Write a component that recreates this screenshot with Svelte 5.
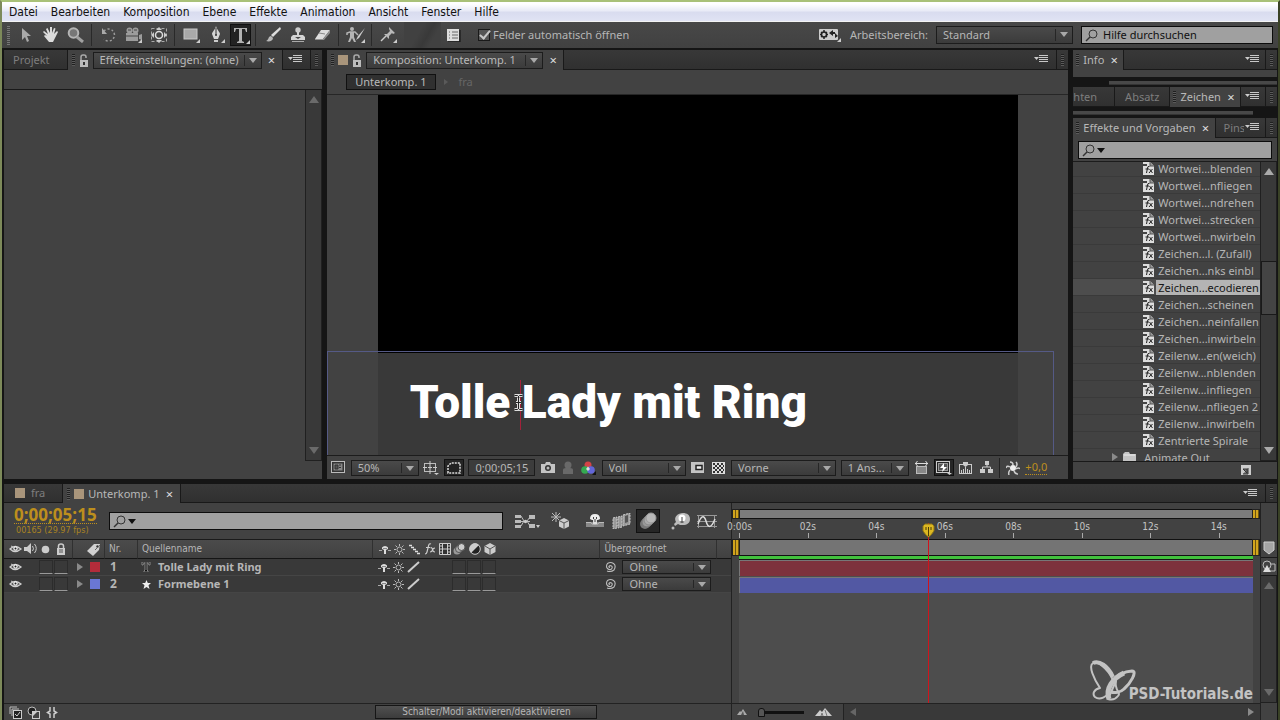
<script>
  const menus = ['Datei', 'Bearbeiten', 'Komposition', 'Ebene', 'Effekte', 'Animation', 'Ansicht', 'Fenster', 'Hilfe'];

  // Each icon: [width, height, svg body]
  const icons = {
    arrow: [14, 16, '<path d="M3 1v12l3-3 2 5 2-1-2-5h4z" fill="#a9a9a9"/>'],
    hand: [18, 16, '<path d="M5 9 1 5l1-1 4 3-2-5 1.500-1L8 6V0h2v6l2-5 1.500.5L12 7l3-3 1 1-3 6-2 4H7L2 9l1-1z" fill="#dcdcdc"/>'],
    zoom: [18, 16, '<circle cx="6.500" cy="6" r="4.800" fill="#777" stroke="#b5b5b5" stroke-width="2"/><path d="m10 10 6 5" stroke="#a0a0a0" stroke-width="3"/>'],
    rotate: [16, 16, '<path d="M3 4a6 6 0 1 1 0 8" fill="none" stroke="#9a9a9a" stroke-width="1.500" stroke-dasharray="2 2"/><path d="M1 1v6h5z" fill="#aaa"/>'],
    camera: [18, 16, '<g fill="#9c9c9c"><circle cx="4.500" cy="3.500" r="3"/><circle cx="10.500" cy="3.500" r="3"/><path d="M1 6h12v8H1zM14 8l3-1v6l-3-1z"/></g><path d="M3 3h3M9 3h3M1 9h12" stroke="#444"/><path d="M17 12v4h-4z" fill="#ccc"/>'],
    panbehind: [18, 18, '<rect x="1.500" y="2.500" width="15" height="13" fill="none" stroke="#aaa" stroke-dasharray="3 2"/><path d="M9 1 6 4h6zM9 17l-3-3h6zM1 9l3-3v6zM17 9l-3-3v6z" fill="#ccc"/><circle cx="9" cy="9" r="3.500" fill="#444" stroke="#ddd" stroke-width="1.500"/>'],
    rect: [18, 16, '<rect x="1" y="2" width="13" height="10" fill="#a9a9a9" stroke="#c8c8c8"/><path d="M17 12v4h-4z" fill="#ccc"/>'],
    pen: [18, 18, '<path d="M8 0c1 4 4 6 4 8l-2 5H6L4 8c0-2 3-4 4-8z" fill="#d5d5d5"/><path d="M8 2v7" stroke="#333"/><circle cx="8" cy="9" r="1" fill="#333"/><path d="M6 14h4v2H6zM17 13v4h-4z" fill="#ccc"/>'],
    type: [18, 18, '<path d="M2 2h13v4h-1l-1-3h-3v12l2 1v1H5v-1l2-1V3H4L3 6H2z" fill="#b2b2b2"/><path d="M18 14v4h-4z" fill="#ccc"/>'],
    brush: [16, 16, '<path d="m15 0-9 8 2 2 8-8z" fill="#ddd"/><path d="M6 9c-3 0-2 4-5 5 3 1 7 0 7-3z" fill="#b8b8b8"/>'],
    stamp: [16, 16, '<circle cx="8" cy="3" r="2.700" fill="#ccc"/><path d="M7 5h2v3h4l2 2v3H1v-3l2-2h4z" fill="#d4d4d4"/><path d="M2 14.500h12" stroke="#aaa"/><path d="M5 10h6l-3 2z" fill="#444"/>'],
    eraser: [18, 14, '<path d="M7 2h9l-7 9H1z" fill="#ddd"/><path d="m9 11 7-9v3l-6 7H1v-1z" fill="#909090"/><path d="m5 5 6 1" stroke="#888"/>'],
    roto: [20, 18, '<circle cx="6" cy="3" r="2" fill="#b5b5b5"/><path d="M1 9V7l3-1h5l3 3" fill="none" stroke="#b5b5b5" stroke-width="1.500"/><path d="M4 6h4v5l2 5H8l-2-4-2 4H2l2-5z" fill="#b5b5b5"/><path d="m19 2-7 8-2 4 3-2z" fill="#ccc"/><path d="M19 13v4h-4z" fill="#ccc"/>'],
    pin: [18, 18, '<path d="m9 1 6 6-2 1-1-1-3 3v3L4 8h3l3-3-1-2z" fill="#b8b8b8"/><path d="m6 10-5 5" stroke="#ccc" stroke-width="1.500"/><path d="M17 13v4h-4z" fill="#ccc"/>'],
    sheet: [14, 14, '<path d="M0 1h12v12H0z" fill="#ddd"/><path d="M2 4h1m2 0h6M2 7h1m2 0h6M2 10h1m2 0h6" stroke="#666"/><path d="M13 2v12H1" fill="none" stroke="#111"/>'],
    gears: [22, 14, '<rect y="1" width="19" height="11" rx="1" fill="#ccc"/><path d="M5 2v9M1 6.500h8M2 4l6 5M8 4 2 9" stroke="#222" stroke-width="1.500"/><circle cx="5" cy="6.500" r="2.500" fill="#ccc" stroke="#222" stroke-width="1.500"/><path d="m14 2-4 3 4 3V6h2v4l3-2-3-3v-1h-2z" fill="#222"/><path d="M22 10v4h-4z" fill="#ccc"/>'],
    lock: [10, 13, '<path d="M2 7V3q0-2 2-2h1q2 0 2 2v1" fill="none" stroke="#aaa" stroke-width="1.500"/><rect x="1" y="6" width="8" height="7" fill="#bcbcbc"/><path d="M5 8v3" stroke="#333" stroke-width="2"/>'],
    closedlock: [10, 12, '<path d="M2.500 6V3q0-2 2.500-2t2.500 2v3" fill="none" stroke="#ccc" stroke-width="1.500"/><rect x="1" y="5" width="8" height="7" fill="#ccc"/><path d="M3 7h4M3 9h4" stroke="#555"/>'],
    menu: [14, 9, '<path d="M0 2h5L2.500 5z" fill="#ccc"/><path d="M5 .5h9m-9 2h9m-9 2h9m-9 2h9" stroke="#c8c8c8"/>'],
    search: [13, 13, '<circle cx="8" cy="5" r="4" fill="none" stroke="#333"/><path d="m5 8-4 4" stroke="#333" stroke-width="1.500"/>'],
    preset: [12, 13, '<path d="M0 0h7l4 4v9H0z" fill="#ddd"/><path d="M7 0v4h4" fill="#999" stroke="#555"/><path d="M6.500 4.500q-2-.5-2 1.500l-1 5M2.500 7H6M6.500 7l3 4M9.500 7l-3.500 4" fill="none" stroke="#222"/><path d="M0 2h4v2H0z" fill="#444"/>'],
    folder: [14, 11, '<path d="M0 2 2 0h4l1 2h6v9H0z" fill="#c4c4c4"/><path d="M1 3h11" stroke="#eee"/>'],
    newitem: [11, 11, '<path d="M0 0h10v10H0z" fill="#ccc"/><path d="M2 4h4v4zM7 3v6H2" fill="#777" stroke="#333"/>'],
    // viewer footer
    monitor: [14, 13, '<rect x=".5" y=".5" width="13" height="11" fill="#333" stroke="#bbb"/><rect x="2.500" y="2.500" width="9" height="7" fill="#888"/><path d="M4 4h3v4H4zM8 4h2M8 6.500h2" fill="#555" stroke="#333"/>'],
    grid: [16, 14, '<rect x="1.500" y="2.500" width="11" height="8" fill="none" stroke="#bbb"/><path d="M7 0v13M0 6.500h4m1 0h4m1 0h4" stroke="#ccc"/><path d="M11 12h5l-2.500 2z" fill="#ccc"/>'],
    mask: [14, 12, '<path d="M1 11V4l3-3h9v10z" fill="#222" stroke="#ddd" stroke-width="1.500" stroke-dasharray="2 1"/>'],
    photo: [14, 12, '<path d="M0 2h4l1-2h4l1 2h4v9H0z" fill="#c4c4c4"/><circle cx="7" cy="6" r="3" fill="#333"/><circle cx="7" cy="6" r="1.500" fill="#bbb"/>'],
    person: [12, 13, '<circle cx="6" cy="4" r="3.500" fill="#696969"/><path d="M1 13V9q0-2 3-2h4q3 0 3 2v4z" fill="#696969"/>'],
    rgb: [16, 14, '<circle cx="7" cy="4" r="3.500" fill="#d34347"/><circle cx="4" cy="9" r="3.800" fill="#35a951"/><circle cx="10" cy="9" r="3.800" fill="#6266d8"/><path d="M7 5.500 9 8l-2 2-2-2z" fill="#ddd"/><path d="M15 10v4h-4z" fill="#111"/>'],
    roi: [14, 11, '<rect width="13" height="11" fill="#c4c4c4"/><rect x="5" y="3.500" width="6" height="4" fill="#eee" stroke="#222" stroke-width="1.500"/>'],
    checker: [13, 12, '<rect width="13" height="12" fill="#ddd"/><path d="M1 2h11M1 6h11M1 10h11" stroke="#333" stroke-width="2" stroke-dasharray="2 2"/><path d="M3 4h9M3 8h9" stroke="#333" stroke-width="2" stroke-dasharray="2 2"/>'],
    aspect: [13, 13, '<rect x="1.500" y="5.500" width="10" height="7" fill="#888" stroke="#bbb"/><path d="M0 2.500h13M2.500 0 .5 2.500l2 2.500M10.500 0l2 2.500-2 2.500" fill="none" stroke="#ddd"/>'],
    fast: [16, 14, '<rect x=".5" y=".5" width="13" height="11" fill="none" stroke="#ccc"/><rect x="2.500" y="2.500" width="9" height="7" fill="#555" stroke="#999"/><path d="M8 2 4 7h3l-1 4 5-5H8z" fill="#fff"/><path d="M11 12h5l-2.500 2z" fill="#ccc"/>'],
    chart: [14, 12, '<rect x=".5" y="2.500" width="12" height="9" fill="none" stroke="#ccc"/><path d="M2.500 11V8m2 3V7m2 4V5m2 6V7m2 4V8" stroke="#ccc"/><path d="M4 0h5v3L6.500 5 4 3z" fill="#ccc"/>'],
    flow: [14, 13, '<path d="M5 0h4v4H5zM0 8h5v4H0zM8 8h5v4H8z" fill="#ccc"/><path d="M7 4v2M2.500 8V6h8v2" fill="none" stroke="#ccc"/>'],
    aperture: [14, 14, '<circle cx="7" cy="7" r="3" fill="#eee"/><path d="M7 4Q7 1 4 1M10 6q2-3 0-5M10 8q3-2 4 0M8 10q1 3 4 3M4 9q-2 2-1 5M4 6Q1 4 0 7" fill="none" stroke="#ccc" stroke-width="1.500"/>'],
    // timeline header
    miniflow: [26, 14, '<path d="M1 1h6v3H1zM1 6h6v3H1zM1 11h6v3H1zM15 1h6v4h-6zM15 10h6v4h-6z" fill="#bbb"/><path d="M7 2l3 5-3 5M4 7.500h12M16 3l-3 4 3 5" fill="none" stroke="#bbb"/><circle cx="11.500" cy="7.500" r="1.700" fill="#ccc"/><path d="M22 11h4l-2 3z" fill="#ccc"/>'],
    draft: [20, 18, '<path d="M5 0v10M0 5h10M1 1l8 8M9 1 1 9" stroke="#bbb"/><path d="m13 6 5 2.500v6L13 17l-5-2.500v-6z" fill="#ccc"/><path d="m8 8.500 5 2.500 5-2.500M13 11v6" fill="none" stroke="#555"/>'],
    shyguy: [18, 14, '<path d="M0 8h18v5H0z" fill="#888"/><path d="M0 8.500h5q0 2 4 2t4-2h5" fill="none" stroke="#bbb"/><path d="M4 5q0-5 5-5t5 5l-2 1H6z" fill="#eee"/><path d="M7 5h4v5H7z" fill="#ddd"/><path d="M7.500 3v2m3-2v2M9 5v3" stroke="#444"/>'],
    blend: [19, 16, '<path d="m1 5 4-1v11l-4 1zM6 4l4-1v11l-4 1zM11 2l7-2v11l-7 2z" fill="#999" stroke="#ccc" stroke-dasharray="2 1"/><path d="m13 3 3-1v7l-3 1z" fill="#555"/>'],
    blur: [18, 18, '<circle cx="6" cy="12" r="5" fill="#777"/><circle cx="8" cy="10" r="5" fill="#999" stroke="#777"/><circle cx="10" cy="8" r="5" fill="#aaa" stroke="#888"/><circle cx="12" cy="6" r="5" fill="#b9b9b9" stroke="#999"/>'],
    idea: [20, 18, '<path d="M12 1c4 0 7 2 7 6s-3 6-7 6c-2 0-4 0-5-1l-3 2-1-2 2-2c-3-5 2-9 7-9z" fill="#bbb"/><circle cx="11" cy="6" r="3.500" fill="#fff"/><path d="M9.500 9h3v2h-3z" fill="#666"/><path d="M11 5v4" stroke="#444"/><circle cx="2" cy="16" r="1.500" fill="#bbb"/>'],
    graph: [20, 15, '<path d="M1.500 1v13m16-13v13M0 1.500h20M0 12.500h20M0 7.500h20" stroke="#999"/><path d="M1 10c3-8 6-10 8-3s5 8 9-2" fill="none" stroke="#ddd" stroke-width="1.500"/>'],
    eye: [13, 10, '<path d="M1 5q5-5 11 0-6 5-11 0z" fill="#555" stroke="#d0d0d0" stroke-width="1.300"/><circle cx="6.500" cy="4.500" r="2.200" fill="#eee"/><circle cx="6.500" cy="4.500" r="1" fill="#222"/><path d="m2 2 2 1" stroke="#ccc"/>'],
    speaker: [14, 12, '<path d="M0 4h3l4-4v11L3 8H0z" fill="#ccc"/><path d="M8.500 3q2 3 0 5M10.500 1q3.500 4.500 0 9" fill="none" stroke="#ccc"/>'],
    dot: [9, 9, '<circle cx="4.500" cy="4.500" r="3.800" fill="#ccc"/>'],
    tag: [15, 13, '<path d="M1 8 8 1l6 0-1 6-6 6z" fill="#d0d0d0"/><circle cx="11.500" cy="3.500" r="1.200" fill="#333"/><path d="m9 7 5-5" stroke="#666"/>'],
    shy: [12, 9, '<path d="M0 5.500h3m6 0h3" stroke="#aaa"/><path d="M3 4V2.500Q4 1 6 1t3 1.500V4L7 5v4H5V5z" fill="#ddd"/><path d="M5 3v1m2-1v1" stroke="#333"/>'],
    sun: [11, 11, '<circle cx="5.500" cy="5.500" r="2.500" fill="none" stroke="#bbb"/><path d="M5.500 0v2m0 7v2M0 5.500h2m7 0h2M1.500 1.500 3 3m5 5 1.500 1.500m0-8L8 3M3 8 1.500 9.500" stroke="#bbb"/>'],
    stair: [11, 11, '<path d="M0 1.500h3m-1 2h3m-1 2h3m-1 2h3m-1 2h3" stroke="#ddd" stroke-width="1.500"/>'],
    slash: [13, 12, '<path d="m1 11 11-10" stroke="#ccc" stroke-width="2"/>'],
    fx: [12, 12, '<path d="M7 1Q5 0 4.500 3L3 9q-.5 2-2 2M2 4.500h4M6.500 5Q8 4 8.500 6.500T11 9M11 5Q9 5 8.500 7T6 9" fill="none" stroke="#ccc" stroke-width="1.200"/>'],
    film: [12, 12, '<path d="M.5.5h11v11H.5z" fill="#333" stroke="#ccc"/><path d="M3.500 0v12m5-12v12M4 6h4M0 3h3m6 0h3M0 6h3m6 0h3M0 9h3m6 0h3" stroke="#ccc"/>'],
    balls: [13, 12, '<circle cx="4" cy="8" r="3.500" fill="#999"/><circle cx="6" cy="6" r="3.500" fill="#aaa" stroke="#555"/><circle cx="8.500" cy="4" r="3.500" fill="#ccc" stroke="#555"/>'],
    half: [12, 12, '<circle cx="6" cy="6" r="5.300" fill="#222" stroke="#ccc"/><path d="M2 10 10 2A5.500 5.500 0 0 0 2 10z" fill="#ccc"/>'],
    cube: [12, 13, '<path d="m6 0 5.500 3v6L6 12 .5 9V3z" fill="#ccc"/><path d="m1 3 5 3 5-3M6 6v6" fill="none" stroke="#555"/>'],
    spiral: [12, 12, '<path d="M6 6.500q-1.500 0-1-1.200Q6 4 7.500 5t0 3q-2 1.500-4-.5t0-5q3-2 6 0t.5 6.500Q7 11.500 3 10" fill="none" stroke="#bbb" stroke-width="1.100"/>'],
    text: [10, 10, '<path d="M1 0h8v3H8L7 1H6v7l1 1v1H3V9l1-1V1H3L2 3H1z" fill="#111" stroke="#888"/>'],
    star: [11, 11, '<path d="m5.500 1 1.300 3H10L7.500 6.200 8.500 10l-3-2-3 2 1-3.800L1 4h3.200z" fill="#eee"/>'],
    marker: [12, 14, '<path d="M1 1h10v8l-5 4-5-4z" fill="#a5a5a5" stroke="#d0d0d0"/>'],
    shapes: [14, 13, '<circle cx="5" cy="5" r="4" fill="none" stroke="#bbb"/><path d="M8 4h5v7H8" fill="none" stroke="#bbb"/><path d="m5 5 4 7H1z" fill="#ddd"/>'],
    sheets: [13, 13, '<path d="M1 8V1h7M3 10V3h7" fill="none" stroke="#bbb"/><rect x="4.500" y="4.500" width="8" height="8" fill="#222" stroke="#ccc"/><path d="m6 8 2 2 3-4" fill="none" stroke="#ccc"/>'],
    modes: [14, 13, '<circle cx="5" cy="5" r="4" fill="#222" stroke="#bbb"/><rect x="5.500" y="5.500" width="7" height="7" fill="#444" stroke="#ccc"/><path d="M6 6h4L6 10z" fill="#ccc"/>'],
    braces: [12, 13, '<path d="M4 1v4L1.500 6.500 4 8v4M8 1v4l2.500 1.500L8 8v4" fill="none" stroke="#ccc" stroke-width="1.500"/>'],
    hillsmall: [10, 6, '<path d="m0 6 3-4 1 1 2-3 4 6z" fill="#aaa"/><path d="m4 6 2-4 1 4" fill="#555"/>'],
    hillbig: [17, 9, '<path d="m0 8 5-6 2 2 3-4 7 8z" fill="#ccc"/><path d="m6 8 1-3 1 3m2-6 2 6" stroke="#777" fill="none"/>'],
    playhead: [13, 15, '<path d="M3 1h7l2 2v5l-3 4-2.500 2L4 12 1 8V3z" fill="#dcb722" stroke="#8d7516"/><path d="M4 4v3m2.500-3v9M9 4v3" stroke="#4b3d05"/>'],
    ibeam: [11, 17, '<path d="M1.500 1.500h3l1 1 1-1h3M5.500 2v13M1.500 15.500h3l1-1 1 1h3M3 8.500h5" fill="none" stroke="#ddd" stroke-width="3"/><path d="M1.500 1.500h3l1 1 1-1h3M5.500 2v13M1.500 15.500h3l1-1 1 1h3M3 8.500h5" fill="none" stroke="#222"/>'],
    butterfly: [50, 44, '<g fill="none" stroke="#c3c3c3" stroke-linejoin="round"><path d="M24 20C18 7 8 1 4 3c-5 3 1 16 7 25-6 1-8 6-5 9 5 4 12-1 14-4" stroke-width="2"/><path d="M4 3c6-3 15 3 20 14" stroke-width="4"/><path d="M20 39c-5-11 7-27 23-28 6 0-2 13-8 18-4 4-10 4-13 3" stroke-width="3"/><path d="M20 39c-4-10 4-21 15-26" stroke-width="5"/><path d="m19 39 8-18c-2 10 6 12 2 15q-4 5-10 3z" stroke-width="2"/></g>'],
  };

  const tools = [['arrow', 'hand', 'zoom'], ['rotate', 'camera', 'panbehind'], ['rect', 'pen', 'type'], ['brush', 'stamp', 'eraser'], ['roto'], ['pin']];

  const presets = [
    'Wortwei...blenden', 'Wortwei...nfliegen', 'Wortwei...ndrehen', 'Wortwei...strecken', 'Wortwei...nwirbeln',
    'Zeichen...l. (Zufall)', 'Zeichen...nks einbl', 'Zeichen...ecodieren', 'Zeichen...scheinen', 'Zeichen...neinfallen',
    'Zeichen...inwirbeln', 'Zeilenw...en(weich)', 'Zeilenw...nblenden', 'Zeilenw...infliegen', 'Zeilenw...nfliegen 2',
    'Zeilenw...inwirbeln', 'Zentrierte Spirale',
  ];
  let selected = $state('Zeichen...ecodieren');

  const layers = [
    { nr: 1, name: 'Tolle Lady mit Ring', icon: 'text', color: '#b32c3a', bar: '#7d323c' },
    { nr: 2, name: 'Formebene 1', icon: 'star', color: '#6a77d4', bar: '#5258a3' },
  ];
  const switchHeads = ['shy', 'sun', 'stair', 'fx', 'film', 'balls', 'half', 'cube'];
  const timelineTools = ['miniflow', 'draft', 'shyguy', 'blend', 'blur', 'idea', 'graph'];

  const duration = 15;
  const playhead = 5.5;
  const ticks = [0, 2, 4, 6, 8, 10, 12, 14];
  const pct = (t) => (t / duration) * 100;
  const label = (t) => (t === 0 ? '0:00s' : String(t).padStart(2, '0') + 's');
</script>

{#snippet icon(name)}
  <svg class="icon" width={icons[name][0]} height={icons[name][1]} viewBox="0 0 {icons[name][0]} {icons[name][1]}" aria-hidden="true">{@html icons[name][2]}</svg>
{/snippet}

{#snippet dropdown(name, value, kind)}
  <span class="dropdown {kind}">
    <select aria-label={name}><option>{value}</option></select>
  </span>
{/snippet}

{#snippet corner()}
  <button class="panel-menu" aria-label="Bedienfeldmenü">{@render icon('menu')}</button>
  <span class="corner"><i class="grip"></i></span>
{/snippet}

<div class="app">
  <nav class="menubar">
    {#each menus as m}<button>{m}</button>{/each}
  </nav>

  <header class="toolbar">
    <i class="grip light"></i>
    <div class="tools">
      {#each tools as group}
        <div class="group">
          {#each group as t}<button class="tool" class:active={t === 'type'} aria-label={t}>{@render icon(t)}</button>{/each}
        </div>
      {/each}
    </div>
    <div class="shade"></div>
    <button class="tool" aria-label="Bedienfelder">{@render icon('sheet')}</button>
    <label class="check"><input type="checkbox" checked />Felder automatisch öffnen</label>
    <button class="tool gears" aria-label="Synchronisieren">{@render icon('gears')}</button>
    <span class="ws-label">Arbeitsbereich:</span>
    {@render dropdown('Arbeitsbereich', 'Standard', 'workspace')}
    <label class="search help">{@render icon('search')}<input type="text" value="Hilfe durchsuchen" aria-label="Hilfe durchsuchen" /></label>
  </header>

  <main class="work">
    <section class="panel effects-settings">
      <div class="tabs">
        <button class="tab wide-pad">Projekt</button>
        <div class="tab on">
          <i class="grip"></i>{@render icon('lock')}
          {@render dropdown('Effekteinstellungen', 'Effekteinstellungen: (ohne)', 'title')}
          <button class="close" aria-label="Schließen">×</button>
        </div>
        <span class="fill"></span>
        {@render corner()}
      </div>
      <div class="strip"></div>
      <div class="scroll-body">
        <div class="fill"></div>
        <div class="scrollbar dim"><i class="up"></i><i class="down"></i></div>
      </div>
      <div class="panel-foot"></div>
    </section>

    <section class="panel viewer">
      <div class="tabs">
        <div class="tab on">
          <i class="grip"></i><i class="swatch tan"></i>{@render icon('lock')}
          {@render dropdown('Komposition', 'Komposition: Unterkomp. 1', 'title')}
          <button class="close" aria-label="Schließen">×</button>
        </div>
        <span class="fill"></span>
        {@render corner()}
      </div>
      <div class="crumbs">
        <button class="crumb">Unterkomp. 1</button><i class="right"></i><span>fra</span>
      </div>
      <div class="stage">
        <div class="canvas">
          <div class="black"></div>
          <div class="lower"><p>Tolle Lady mit Ring</p></div>
        </div>
        <div class="bounds"></div>
        <i class="caret"></i>
        <span class="cursor">{@render icon('ibeam')}</span>
      </div>
      <div class="viewer-foot">
        <button aria-label="Vorschau">{@render icon('monitor')}</button>
        {@render dropdown('Zoom', '50%', 'zoomsel')}
        <button aria-label="Raster">{@render icon('grid')}</button>
        <button class="active" aria-label="Maske">{@render icon('mask')}</button>
        <button class="timebox">0;00;05;15</button>
        <button aria-label="Schnappschuss">{@render icon('photo')}</button>
        <button aria-label="Schnappschuss zeigen">{@render icon('person')}</button>
        <button aria-label="Kanäle">{@render icon('rgb')}</button>
        {@render dropdown('Auflösung', 'Voll', 'res')}
        <button aria-label="Bereich">{@render icon('roi')}</button>
        <button aria-label="Transparenz">{@render icon('checker')}</button>
        {@render dropdown('Ansicht', 'Vorne', 'view')}
        {@render dropdown('Ansichten', '1 Ans...', 'count')}
        <button aria-label="Seitenverhältnis">{@render icon('aspect')}</button>
        <button class="active" aria-label="Schnelle Vorschau">{@render icon('fast')}</button>
        <button aria-label="Zeitleiste">{@render icon('chart')}</button>
        <button aria-label="Flussdiagramm">{@render icon('flow')}</button>
        <i class="rule"></i>
        <button aria-label="Belichtung">{@render icon('aperture')}</button>
        <button class="gold">+0,0</button>
      </div>
    </section>

    <aside class="side">
      <section class="panel">
        <div class="tabs">
          <div class="tab on"><i class="grip"></i>Info<button class="close" aria-label="Schließen">×</button></div>
          <span class="fill"></span>
          {@render corner()}
        </div>
        <div class="sliver"></div>
      </section>
      <div class="track end"></div>
      <section class="panel">
        <div class="tabs">
          <button class="tab cut">hten</button>
          <button class="tab">Absatz</button>
          <div class="tab on"><i class="grip"></i>Zeichen<button class="close" aria-label="Schließen">×</button></div>
          <span class="fill"></span>
          {@render corner()}
        </div>
      </section>
      <div class="track start"></div>
      <section class="panel presets">
        <div class="tabs">
          <div class="tab on"><i class="grip"></i>Effekte und Vorgaben<button class="close" aria-label="Schließen">×</button></div>
          <button class="tab clip">Pins</button>
          {@render corner()}
        </div>
        <div class="search-row">
          <label class="search">{@render icon('search')}<i class="tri"></i><input type="text" aria-label="Effekte suchen" /></label>
        </div>
        <div class="scroll-body">
          <ul class="list">
            {#each presets as p}
              <li class:selected={p === selected}>
                <button onclick={() => (selected = p)}>{@render icon('preset')}<span>{p}</span></button>
              </li>
            {/each}
            <li class="folder"><button><i class="right"></i>{@render icon('folder')}<span>Animate Out</span></button></li>
          </ul>
          <div class="scrollbar"><i class="up"></i><b class="thumb"></b><i class="down"></i></div>
        </div>
        <div class="panel-foot"><button aria-label="Neu">{@render icon('newitem')}</button></div>
      </section>
    </aside>
  </main>

  <section class="panel timeline">
    <div class="tabs">
      <button class="tab"><i class="swatch tan"></i>fra</button>
      <div class="tab on"><i class="grip"></i><i class="swatch tan"></i>Unterkomp. 1<button class="close" aria-label="Schließen">×</button></div>
      <span class="fill"></span>
      {@render corner()}
    </div>
    <div class="tl-grid">
      <div class="layers">
        <div class="tl-head">
          <div class="clock">
            <button class="gold big">0;00;05;15</button>
            <small>00165 (29.97 fps)</small>
          </div>
          <label class="search">{@render icon('search')}<i class="tri"></i><input type="text" aria-label="Ebenen suchen" /></label>
          <div class="tl-tools">
            {#each timelineTools as t}<button class={t} class:active={t === 'blur'} aria-label={t}>{@render icon(t)}</button>{/each}
          </div>
        </div>
        <table>
          <colgroup><col class="c-av" /><col class="c-label" /><col class="c-nr" /><col /><col class="c-switch" /><col class="c-parent" /><col class="c-rest" /></colgroup>
          <thead>
            <tr>
              <th><div class="slots">{@render icon('eye')}{@render icon('speaker')}{@render icon('dot')}{@render icon('closedlock')}</div></th>
              <th><div class="labelcell head">{@render icon('tag')}</div></th>
              <th>Nr.</th>
              <th>Quellenname</th>
              <th><div class="slots">{#each switchHeads as s}{@render icon(s)}{/each}</div></th>
              <th>Übergeordnet</th>
              <th></th>
            </tr>
          </thead>
          <tbody>
            {#each layers as l}
              <tr>
                <td><div class="slots">{@render icon('eye')}<span></span><i class="box"></i><i class="box"></i></div></td>
                <td><div class="labelcell"><i class="right"></i><i class="swatch" style="background:{l.color}"></i></div></td>
                <td>{l.nr}</td>
                <td><div class="namecell"><b>{@render icon(l.icon)}</b><span>{l.name}</span></div></td>
                <td><div class="slots">{@render icon('shy')}{@render icon('sun')}{@render icon('slash')}<span></span><span></span><i class="box"></i><i class="box"></i><i class="box"></i></div></td>
                <td><div class="parentcell">{@render icon('spiral')}{@render dropdown('Übergeordnet ' + l.name, 'Ohne', 'parent')}</div></td>
                <td></td>
              </tr>
            {/each}
          </tbody>
        </table>
        <div class="fill"></div>
        <footer class="tl-foot">
          <button aria-label="Schalter">{@render icon('sheets')}</button>
          <button aria-label="Modi">{@render icon('modes')}</button>
          <button aria-label="In/Out">{@render icon('braces')}</button>
          <button class="toggle">Schalter/Modi aktivieren/deaktivieren</button>
        </footer>
      </div>

      <div class="time">
        <div class="nav"><i class="handle"></i><i class="handle"></i></div>
        <div class="ruler">
          {#each ticks as t}<span style="left:{pct(t)}%">{label(t)}</span>{/each}
        </div>
        <div class="workbar"><i class="handle"></i><i class="handle"></i></div>
        <div class="cache"></div>
        <div class="bars">
          {#each layers as l}<div class="bar" style="background:{l.bar}"></div>{/each}
        </div>
        <footer class="time-foot">
          {@render icon('hillsmall')}
          <input type="range" min="0" max="100" value="0" aria-label="Zeitzoom" />
          {@render icon('hillbig')}
          <div class="hscroll"><i class="left"></i><i class="right"></i></div>
        </footer>
        <div class="playline"><div style="left:{pct(playhead)}%">{@render icon('playhead')}</div></div>
        <div class="brand">{@render icon('butterfly')}<span>PSD-Tutorials.de</span></div>
      </div>

      <div class="gutter">
        <button class="mark" aria-label="Marke">{@render icon('marker')}</button>
        <button class="mark low" aria-label="Formen">{@render icon('shapes')}</button>
        <div class="scrollbar dim"><i class="up"></i><i class="down"></i></div>
      </div>
    </div>
  </section>
</div>

<style>
  :global(body) { margin: 0; background: #151515; }
  * { box-sizing: border-box; }
  .app {
    height: 100vh; min-height: 560px; display: flex; flex-direction: column; overflow: hidden;
    border: solid #7d8a5a; border-width: 2px 2px 0; border-top-color: #a9c178; border-right-color: #3a4226;
    background: #151515; color: #b6b6b6; font: 11px/16px "Noto Sans", "Open Sans", sans-serif;
  }
  button, input, select { font: inherit; color: inherit; margin: 0; padding: 0; border: 0; background: none; border-radius: 0; outline: none; }
  button { display: flex; align-items: center; justify-content: center; white-space: nowrap; }
  .icon { flex: none; display: block; }
  i { flex: none; display: block; }
  .fill { flex: 1; min-width: 0; }

  .menubar { display: flex; flex: none; gap: 1px; height: 20px; padding-left: 1px; background: linear-gradient(#fff 10%, #e9ebf7 45%, #d9dcef 55%, #e0e3f4); border-bottom: 1px solid #f4f4f4; color: #111; font: 12px/18px "DejaVu Sans Condensed", "DejaVu Sans", sans-serif; }
  .menubar button { padding: 0 6px; }

  .toolbar { display: flex; flex: none; align-items: center; height: 26px; background: linear-gradient(#484848, #414141); padding-left: 5px; padding-right: 5px; }
  .grip { width: 3px; height: 12px; background: repeating-linear-gradient(#202020 0 1px, #5a5a5a 1px 2px); }
  .grip.light { height: 19px; background: repeating-linear-gradient(#777 0 1px, #444 1px 2px); margin-right: 3px; }
  .tools, .group { display: flex; align-items: center; }
  .group { padding-right: 3px; margin-right: 4px; border-right: 1px solid #292929; }
  .group:last-child { border: 0; margin: 0; }
  .tool { width: 25px; height: 22px; }
  .tool.active { width: 21px; margin: 0 1px; background: #222; border: 1px solid #111; }
  .shade { width: 37px; height: 100%; background: linear-gradient(120deg, #414141 40%, #393939 60%, #414141 75%); }
  .check { display: flex; align-items: center; gap: 3px; margin-left: 12px; }
  .check input { appearance: none; width: 12px; height: 12px; border: 1px solid #191919; background: #555; position: relative; }
  .check input:checked::after { content: ""; position: absolute; left: 3px; top: -2px; width: 4px; height: 9px; border: solid #c8c8c8; border-width: 0 2px 2px 0; transform: rotate(40deg); }
  .gears { margin-left: auto; }
  .ws-label { margin: 0 8px; }
  .help { width: 192px; margin-left: 8px; color: #111; }

  .dropdown { position: relative; display: flex; height: 16px; border: 1px solid #1c1c1c; background: linear-gradient(#4a4a4a, #3b3b3b); }
  .dropdown select { appearance: none; width: 100%; padding: 0 18px 0 6px; line-height: 14px; text-overflow: ellipsis; }
  .dropdown::before { content: ""; position: absolute; right: 16px; top: 2px; bottom: 2px; width: 1px; background: #262626; pointer-events: none; }
  .dropdown::after { content: ""; position: absolute; right: 4px; top: 5px; border: 4px solid transparent; border-top: 5px solid #a9a9a9; border-bottom: 0; pointer-events: none; }
  .workspace { width: 137px; height: 18px; }
  .title { height: 17px; }
  .title select { padding-right: 22px; }
  .viewer .title select { padding-right: 26px; }

  .search { display: flex; align-items: center; gap: 2px; height: 18px; padding: 0 3px; background: #a0a0a0; border: 1px solid #0c0c0c; }
  .search input { flex: 1; min-width: 0; }
  .help input { padding-left: 3px; }
  .tri { border: 4px solid transparent; border-top: 5px solid #111; border-bottom: 0; }
  .up { border: 5px solid transparent; border-bottom: 7px solid #aaa; border-top: 0; }
  .down { border: 5px solid transparent; border-top: 7px solid #aaa; border-bottom: 0; }
  .right { border: 4px solid transparent; border-left: 6px solid #8a8a8a; border-right: 0; }
  .left { border: 4px solid transparent; border-right: 6px solid #666; border-left: 0; }
  .dim .up { border-bottom-color: #6a6a6a; }
  .dim .down { border-top-color: #6a6a6a; }

  .work { flex: 430 1 0; min-height: 0; display: flex; gap: 5px; padding: 2px 1px 0 2px; }
  .panel { display: flex; flex-direction: column; min-width: 0; min-height: 0; background: #424242; }
  .tabs { display: flex; flex: none; height: 20px; background: linear-gradient(#383838, #303030); border-bottom: 1px solid #191919; }
  .tab { display: flex; align-items: center; gap: 6px; height: 19px; padding: 0 14px; color: #7e7e7e; border-right: 1px solid #191919; white-space: nowrap; }
  .tab.on { flex: none; height: 20px; gap: 4px; padding: 0 4px; background: #424242; color: #b9b9b9; }
  .tab.wide-pad { padding: 0 17px 0 9px; }
  .close { width: 12px; height: 14px; color: #ddd; font-size: 13px; }
  .panel-menu { width: 18px; margin-right: 6px; }
  .corner { display: flex; flex: none; align-items: center; width: 12px; padding-left: 4px; border-left: 1px solid #191919; }
  .swatch { width: 10px; height: 10px; }
  .tan { background: #a9957b; }

  .effects-settings { flex: 0 0 25%; }
  .strip { flex: none; height: 20px; border-bottom: 1px solid #191919; }
  .scroll-body { flex: 1; min-height: 0; display: flex; overflow: hidden; }
  .scrollbar { flex: none; width: 17px; display: flex; flex-direction: column; align-items: center; justify-content: space-between; padding: 6px 0; background: #393939; border: 1px solid #202020; border-top: 0; }
  .panel-foot { flex: none; height: 18px; display: flex; align-items: center; justify-content: flex-end; padding-right: 25px; }

  .viewer { flex: 1; }
  .crumbs { flex: none; display: flex; align-items: center; gap: 8px; height: 25px; padding-left: 19px; color: #666; border-bottom: 1px solid #262626; }
  .crumb { height: 16px; padding: 0 8px; background: #303030; border: 1px solid #111; color: #b9b9b9; }
  .crumbs .right { border-left-color: #5a5a5a; border-width: 3px 0 3px 4px; }
  .crumbs span { padding-left: 3px; }
  .stage { flex: 1; min-height: 0; position: relative; display: flex; justify-content: center; overflow: hidden; }
  .canvas { width: 640px; max-width: 87%; display: flex; flex-direction: column; }
  .black { flex: 258; background: #000; }
  .lower { flex: 102; background: #393939; padding-left: 5%; display: flex; align-items: center; }
  .lower p { margin: 0 0 4px; font: 900 46px/52px Roboto, sans-serif; color: #fff; white-space: nowrap; }
  .bounds { position: absolute; left: 0; right: 2%; top: 71%; bottom: 0; border: 1px solid #555a86; border-bottom: 0; }
  .caret { position: absolute; left: 26%; top: 79%; height: 50px; border-left: 1px solid #a3213a; }
  .cursor { position: absolute; left: 25%; top: 83%; }
  .viewer-foot { flex: none; display: flex; align-items: center; justify-content: space-between; height: 24px; padding: 0 21px 0 3px; border-top: 1px solid #1c1c1c; }
  .viewer-foot button { min-width: 16px; height: 17px; }
  .viewer-foot .active { width: 20px; background: #262626; border: 1px solid #111; }
  .viewer-foot .timebox { width: 67px; border: 1px solid #1c1c1c; background: #3c3c3c; }
  .zoomsel { width: 68px; }
  .res { width: 84px; }
  .view { width: 105px; }
  .count { width: 68px; }
  .rule { width: 1px; height: 20px; background: #222; }
  .gold { color: #bd8f1d; border-bottom: 1px dotted #bd8f1d; }
  .viewer-foot .gold { height: 14px; border-bottom: 1px dotted #bd8f1d; }

  .side { flex: 0 0 16%; display: flex; flex-direction: column; min-width: 0; }
  .sliver { height: 7px; }
  .track { flex: none; height: 4px; background: #484848; border-bottom: 1px solid #333; margin: 4px 0 2px 36px; }
  .track.start { margin: 4px 24px 3px 0; }
  .side .tab { padding: 0 10px; }
  .side .tab.on { padding: 0 3px; }
  .side .tab.cut { padding: 0 17px 0 0; }
  .side .panel-menu { width: 16px; margin-right: 5px; }
  .side .tab.clip { flex: 1; min-width: 0; overflow: hidden; justify-content: flex-start; padding: 0 0 0 8px; border: 0; }
  .presets { flex: 1; }
  .search-row { flex: none; height: 24px; padding: 3px 5px; border-bottom: 1px solid #1c1c1c; }
  .list { flex: 1; min-width: 0; margin: -2px 0 0; padding: 0; list-style: none; overflow: hidden; }
  .list li { height: 17px; border-bottom: 1px solid #3a3a3a; }
  .list button { width: 100%; height: 16px; justify-content: flex-start; gap: 1px; padding-left: 70px; }
  .list button span { padding: 0 2px; line-height: 15px; }
  .list .selected { background: #4d4d4d; }
  .list .selected span { background: #b4b4b4; color: #161616; }
  .list .folder button { padding-left: 39px; gap: 5px; }
  .thumb { width: 16px; height: 54px; margin-top: -46px; border: 1px solid #191919; background: #444; }
  .presets .panel-foot { border-top: 1px solid #191919; }

  .timeline { flex: 236 1 0; margin: 5px 1px 0 2px; }
  .timeline .tabs { height: 19px; }
  .timeline .tab { height: 18px; padding: 0 17px 0 11px; }
  .timeline .tab.on { height: 19px; padding: 0 4px; }
  .tl-grid { flex: 1; min-height: 0; display: grid; grid-template-columns: 729fr 528fr 17px; }
  .layers { display: flex; flex-direction: column; min-width: 0; min-height: 0; border-right: 1px solid #222; }
  .tl-head { flex: none; display: flex; align-items: center; height: 37px; padding-left: 10px; border-bottom: 1px solid #1a1a1a; }
  .clock { width: 95px; display: flex; flex-direction: column; align-items: flex-start; }
  .big { font: bold 17px/17px "Noto Sans", sans-serif; }
  .clock small { padding-left: 2px; font: 9px/12px "DejaVu Sans Condensed", sans-serif; color: #a98322; }
  .tl-head .search { flex: 1; }
  .tl-tools { display: flex; align-items: center; padding: 0 11px 0 8px; }
  .tl-tools button { width: 26px; height: 24px; }
  .tl-tools .miniflow { width: 32px; margin-right: 4px; }
  .tl-tools .draft { width: 28px; margin-right: 7px; }
  .tl-tools .active { background: #262626; border: 1px solid #111; width: 24px; margin: 0 8px 0 2px; }

  table { width: 100%; table-layout: fixed; border-collapse: separate; border-spacing: 0; background: #393939; }
  .c-av { width: 68px; } .c-label { width: 32px; } .c-nr { width: 33px; } .c-switch { width: 227px; } .c-parent { width: 117px; } .c-rest { width: 15px; }
  th, td { height: 17px; padding: 0; text-align: left; font-weight: normal; white-space: nowrap; overflow: hidden; }
  th { height: 19px; padding-left: 4px; background: linear-gradient(#4b4b4b, #414141); border-bottom: 1px solid #151515; font: 10px/14px "DejaVu Sans Condensed", sans-serif; }
  th + th { border-left: 1px solid #303030; }
  td { border-bottom: 1px solid #454545; }
  td:nth-child(3) { padding-left: 6px; font: bold 12px/14px "Noto Sans", sans-serif; }
  .slots { display: grid; grid-auto-flow: column; grid-auto-columns: 15px; place-items: center; justify-content: start; padding-left: 4px; height: 16px; }
  th .slots { padding-left: 0; height: 17px; }
  .box { width: 14px; height: 14px; border: 1px solid #2c2c2c; border-bottom-color: #999; }
  .labelcell { display: flex; align-items: center; gap: 7px; padding-left: 5px; }
  .labelcell.head { padding-left: 9px; }
  .namecell { display: flex; align-items: center; gap: 6px; padding-left: 4px; font: bold 11px/14px "Noto Sans", sans-serif; }
  .namecell b { width: 11px; }
  .parentcell { display: flex; align-items: center; gap: 6px; padding-left: 5px; }
  .parent { width: 89px; height: 14px; }
  .parent select { line-height: 12px; }
  .parent::after { top: 4px; }
  .tl-foot { flex: none; display: flex; align-items: center; gap: 5px; height: 17px; padding: 0 134px 0 5px; border-top: 1px solid #222; }
  .toggle { width: 222px; height: 14px; margin-left: auto; background: linear-gradient(#505050, #3c3c3c); border: 1px solid #161616; font: 10px/12px "DejaVu Sans Condensed", sans-serif; }

  .time { position: relative; display: flex; flex-direction: column; min-width: 0; min-height: 0; }
  .nav { flex: none; display: flex; justify-content: space-between; height: 10px; margin: 6px 0 0; background: #7c7c7c; border: 1px solid #111; border-radius: 4px; }
  .handle { width: 6px; background: repeating-linear-gradient(90deg, #d2a41d 0 2px, #6b5310 2px 3px); outline: 1px solid #222; }
  .ruler { flex: none; position: relative; height: 20px; margin: 0 7px; font: 10px/16px "DejaVu Sans Condensed", sans-serif; color: #c4c4c4; }
  .ruler span { position: absolute; top: 0; height: 20px; width: 40px; margin-left: -20px; text-align: center; }
  .ruler span::after { content: ""; position: absolute; left: 20px; bottom: 1px; width: 1px; height: 5px; background: #aaa; }
  .workbar { flex: none; display: flex; justify-content: space-between; height: 17px; background: #747474; border: 1px solid #111; }
  .cache { flex: none; height: 4px; margin: 0 7px; background: #42c13e; border-bottom: 1px solid #151515; }
  .bars { flex: 1; min-height: 0; margin: 0 7px; background: #4d4d4d; }
  .bar { height: 16px; margin-bottom: 1px; border: 1px solid #777; border-width: 1px 0 0 1px; }
  .time-foot { flex: none; display: flex; align-items: center; gap: 11px; height: 17px; padding-left: 5px; border-top: 1px solid #222; }
  .time-foot input { appearance: none; width: 46px; height: 10px; background: linear-gradient(transparent 4px, #111 4px 7px, transparent 7px); }
  .time-foot input::-webkit-slider-thumb { appearance: none; width: 7px; height: 9px; background: #555; border: 1px solid #111; border-radius: 3px 3px 0 0; }
  .hscroll { flex: 1; display: flex; align-items: center; justify-content: space-between; height: 16px; padding: 0 6px; background: #393939; border-left: 1px solid #222; }
  .playline { position: absolute; left: 7px; right: 7px; top: 20px; bottom: 17px; pointer-events: none; }
  .playline div { position: absolute; top: 0; bottom: 0; border-left: 1px solid #d0141c; }
  .playline div :global(svg) { margin-left: -7px; }
  .brand { position: absolute; right: 7px; bottom: 16px; display: flex; align-items: flex-end; color: #c3c3c3; font: bold 15px/20px "DejaVu Sans Condensed", sans-serif; }
  .brand span { margin-left: -10px; }

  .gutter { display: flex; flex-direction: column; border-left: 1px solid #222; padding-top: 36px; }
  .mark { flex: none; height: 19px; border-bottom: 1px solid #191919; }
  .mark.low { height: 18px; }
  .gutter .scrollbar { flex: 1; width: 16px; border-left: 0; margin-bottom: 17px; }
</style>
